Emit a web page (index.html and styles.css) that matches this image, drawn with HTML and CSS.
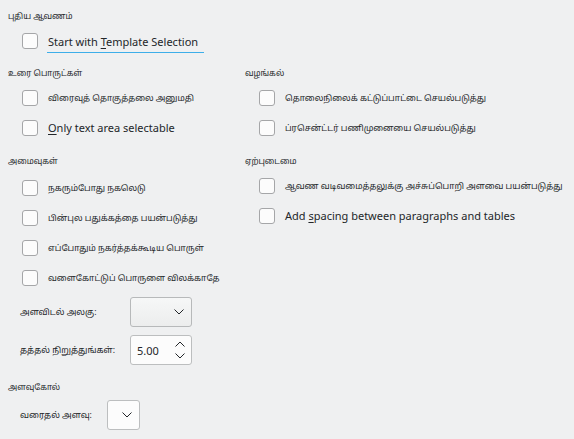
FILE: index.html
```html
<!DOCTYPE html>
<html lang="ta">
<head>
<meta charset="utf-8">
<link rel="stylesheet" href="styles.css">
</head>
<body>
<div class="page">
  <section class="group g-new">
    <div class="hdr">புதிய ஆவணம்</div>
    <label class="cb focus"><span class="box"></span><span class="txt">Start with <u>T</u>emplate Selection</span></label>
  </section>

  <div class="cols cols-1">
    <section class="group">
      <div class="hdr">உரை பொருட்கள்</div>
      <label class="cb"><span class="box"></span><span class="txt ta">விரைவுத் தொகுத்தலை அனுமதி</span></label>
      <label class="cb"><span class="box"></span><span class="txt"><u>O</u>nly text area selectable</span></label>
    </section>
    <section class="group">
      <div class="hdr">வழங்கல்</div>
      <label class="cb"><span class="box"></span><span class="txt ta">தொலைநிலைக் கட்டுப்பாட்டை செயல்படுத்து</span></label>
      <label class="cb"><span class="box"></span><span class="txt ta">ப்ரசென்ட்டர் பணிமுனையை செயல்படுத்து</span></label>
    </section>
  </div>

  <div class="cols cols-2">
    <section class="group">
      <div class="hdr">அமைவுகள்</div>
      <div class="list-left">
        <label class="cb"><span class="box"></span><span class="txt ta">நகரும்போது நகலெடு</span></label>
        <label class="cb"><span class="box"></span><span class="txt ta">பின்புல பதுக்கத்தை பயன்படுத்து</span></label>
        <label class="cb"><span class="box"></span><span class="txt ta">எப்போதும் நகர்த்தக்கூடிய பொருள்</span></label>
        <label class="cb"><span class="box"></span><span class="txt ta">வளைகோட்டுப் பொருளை விலக்காதே</span></label>
      </div>
      <div class="form">
        <span class="flabel">அளவிடல் அலகு:</span>
        <div class="combo btn"><svg class="chev" width="10" height="6" viewBox="0 0 10 6"><path d="M0.5 0.5 L5 5 L9.5 0.5" fill="none" stroke="#232629" stroke-width="1"/></svg></div>
        <span class="flabel">தத்தல் நிறுத்துங்கள்:</span>
        <div class="spin"><span class="val">5.00</span>
          <svg class="arrows" width="10" height="18" viewBox="0 0 10 18"><path d="M0.5 5.5 L5 1 L9.5 5.5" fill="none" stroke="#232629" stroke-width="1"/><path d="M0.5 12.5 L5 17 L9.5 12.5" fill="none" stroke="#232629" stroke-width="1"/></svg>
        </div>
      </div>
    </section>
    <section class="group">
      <div class="hdr">ஏற்புடைமை</div>
      <label class="cb"><span class="box"></span><span class="txt ta">ஆவண வடிவமைத்தலுக்கு அச்சுப்பொறி அளவை பயன்படுத்து</span></label>
      <label class="cb"><span class="box"></span><span class="txt">Add <u>s</u>pacing between paragraphs and tables</span></label>
    </section>
  </div>

  <section class="group g-scale">
    <div class="hdr">அளவுகோல்</div>
    <div class="form form-2">
      <span class="flabel">வரைதல் அளவு:</span>
      <div class="combo small"><svg class="chev" width="10" height="6" viewBox="0 0 10 6"><path d="M0.5 0.5 L5 5 L9.5 0.5" fill="none" stroke="#232629" stroke-width="1"/></svg></div>
    </div>
  </section>
</div>
</body>
</html>
```

FILE: styles.css
```css
html, body {
  margin: 0;
  padding: 0;
  background: #eff0f1;
  color: #232629;
  font-family: "Noto Sans", "Noto Sans Tamil", "Lohit Tamil", sans-serif;
  font-size: 11px;
}
.page {
  width: 574px;
  height: 439px;
  padding: 6px 0 0 8px;
  box-sizing: border-box;
  overflow: hidden;
}
.group {
  display: flex;
  flex-direction: column;
}
.hdr {
  height: 20px;
  line-height: 20px;
  font-size: 8.2px;
  white-space: nowrap;
}
.cb {
  display: flex;
  align-items: center;
  height: 30px;
  padding-left: 14px;
  white-space: nowrap;
}
.box {
  width: 14px;
  height: 14px;
  border: 1px solid #a5a6a8;
  border-radius: 3px;
  background: #fcfcfc;
  flex: none;
}
.txt {
  margin-left: 10px;
  font-size: 11px;
  line-height: 16px;
}
.txt.ta {
  font-size: 8.5px;
}
.txt u {
  text-decoration-thickness: 1px;
  text-underline-offset: 2px;
}
.cb.focus .txt {
  margin-left: 9px;
  padding: 5px 6px 2px 1px;
  border-bottom: 1px solid #3daee9;
}
.cols {
  display: grid;
  grid-template-columns: 237px 1fr;
}
.cols-1 { margin-top: 7px; }
.cols-2 { margin-top: 8px; }
.list-left { margin-top: 2px; }
.form {
  display: grid;
  grid-template-columns: 110px auto;
  justify-content: start;
  align-items: center;
  row-gap: 8px;
  padding-left: 12px;
  margin-top: 4px;
}
.flabel {
  font-size: 8.6px;
  white-space: nowrap;
}
.combo, .spin {
  height: 28px;
  border: 1px solid #bcbebf;
  border-radius: 3px;
  box-sizing: content-box;
  display: flex;
  align-items: center;
  background: #fcfcfc;
}
.combo.btn {
  width: 60px;
  background: linear-gradient(#f6f7f7, #eceded);
  border-color: #b7b9ba;
  justify-content: flex-end;
}
.combo .chev { margin-right: 7px; }
.spin {
  width: 60px;
  justify-content: space-between;
}
.spin .val { margin-left: 6px; font-size: 11px; }
.spin .arrows { margin-right: 6px; }
.g-scale { margin-top: 12px; }
.form-2 {
  grid-template-columns: 87px auto;
  margin-top: 3px;
}
.combo.small {
  width: 31px;
  justify-content: flex-end;
}
```
